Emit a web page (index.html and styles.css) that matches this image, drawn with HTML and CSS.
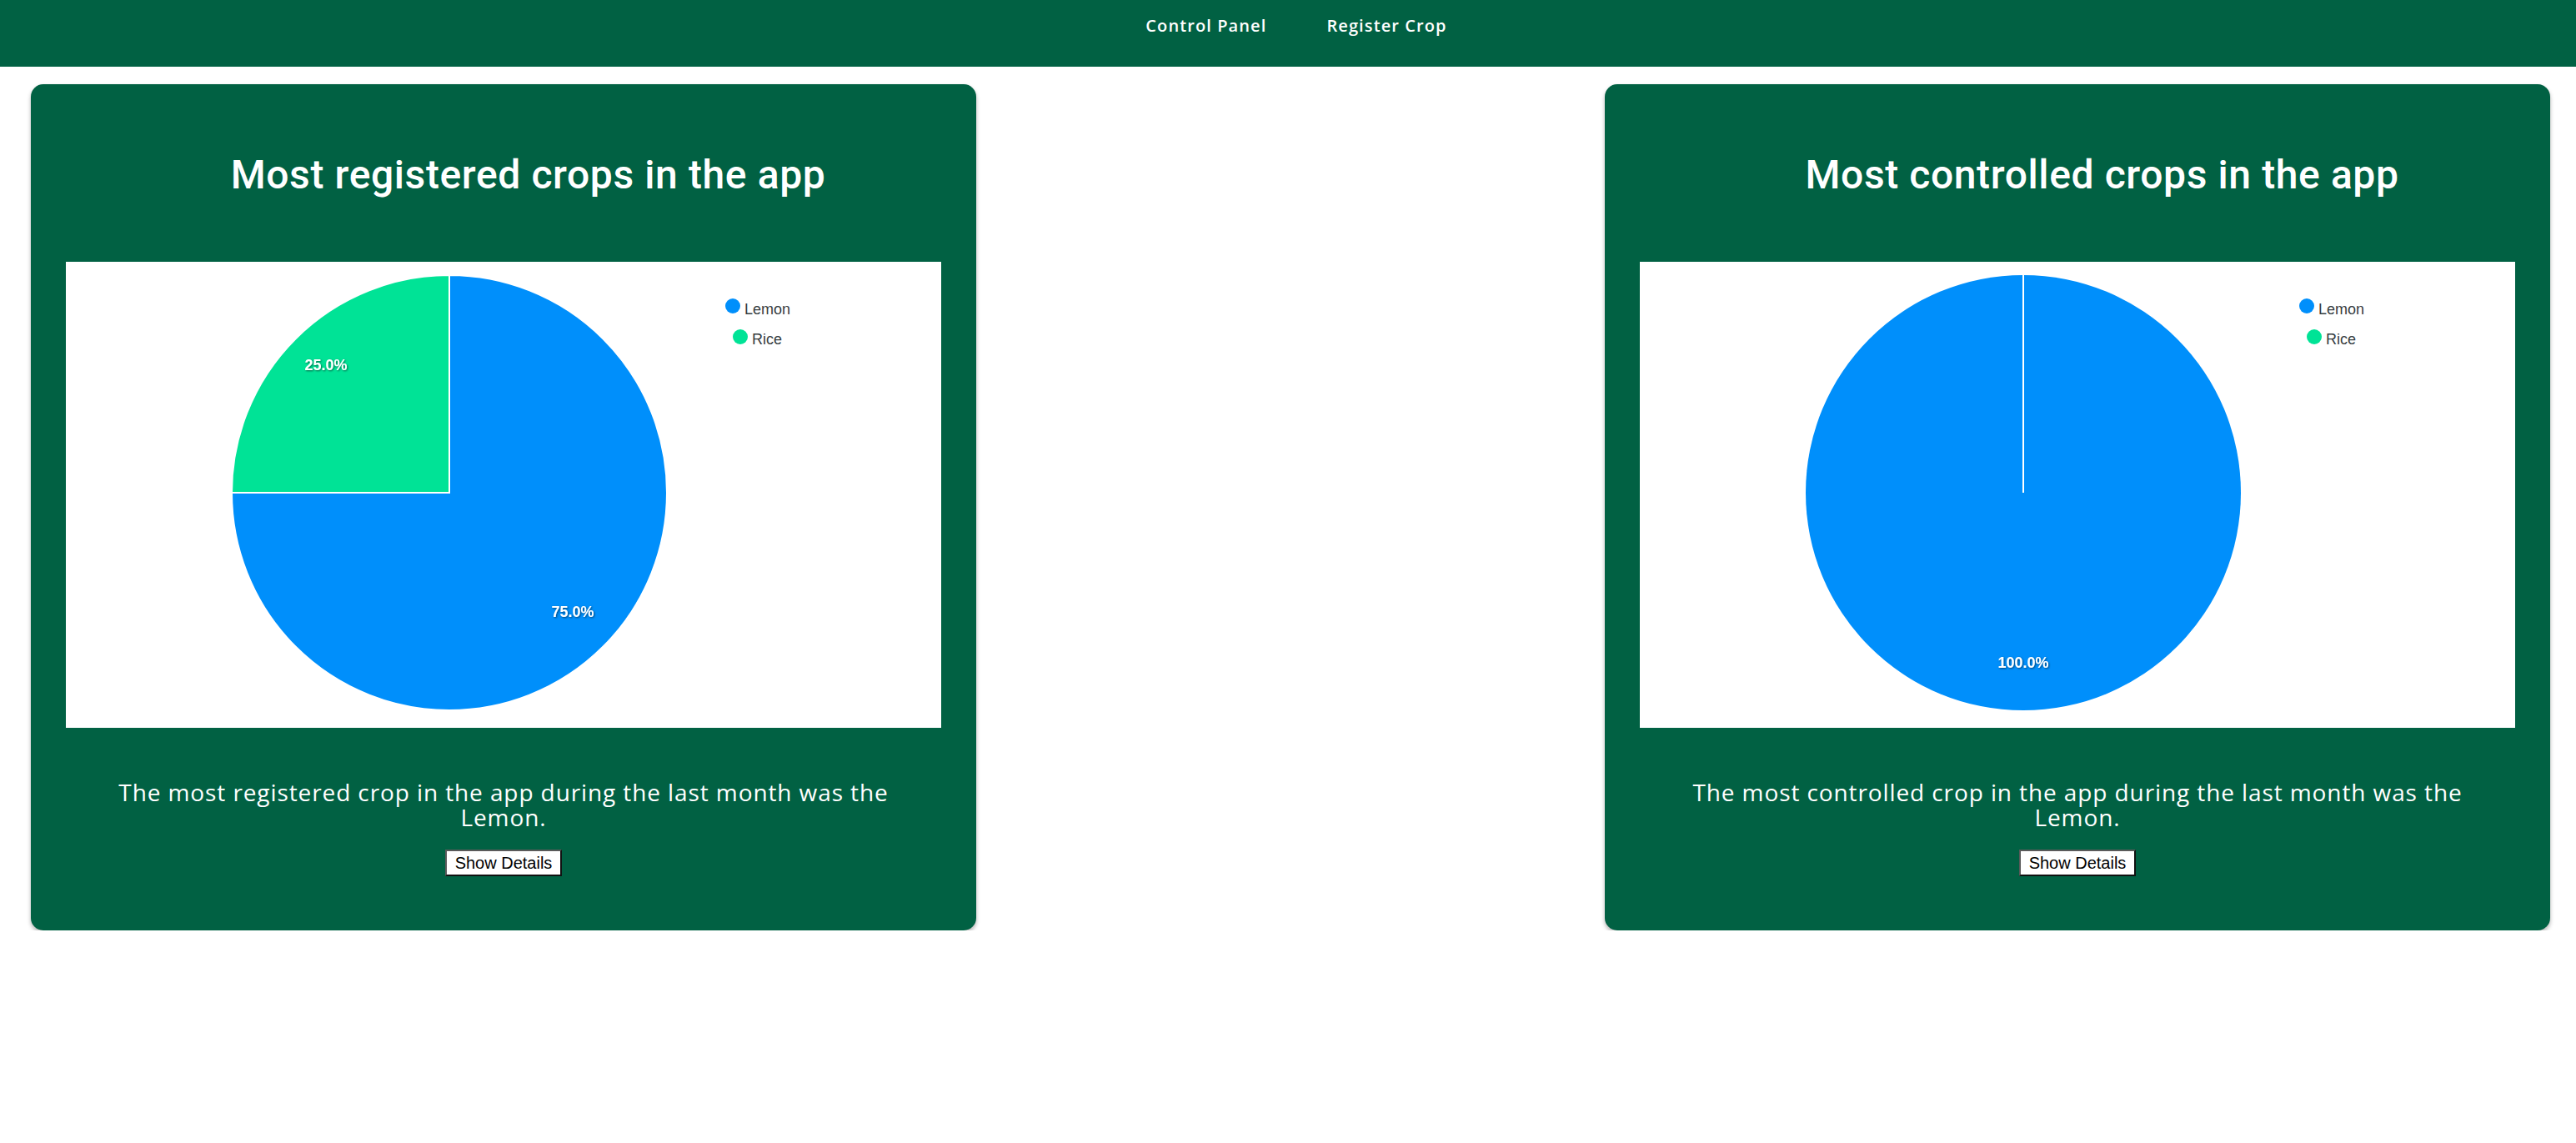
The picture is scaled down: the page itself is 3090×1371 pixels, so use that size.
FILE: index.html
```html
<!DOCTYPE html>
<html lang="en">
<head>
<meta charset="utf-8">
<title>Crops Dashboard</title>
<link rel="stylesheet" href="styles.css">
</head>
<body>
<header class="topbar">
  <nav class="nav">
    <a class="nav-link" href="#">Control Panel</a>
    <a class="nav-link" href="#">Register Crop</a>
  </nav>
</header>
<main class="dashboard">
  <section class="card">
    <h1 class="card-title">Most registered crops in the app</h1>
    <div class="chart">
      <svg class="chart-svg" width="1050" height="559" viewBox="0 0 1050 559">
        <defs>
          <filter id="ds1" x="-20%" y="-40%" width="140%" height="180%">
            <feDropShadow dx="1" dy="1" stdDeviation="1" flood-color="#000" flood-opacity="0.55"/>
          </filter>
        </defs>
        <path d="M460,277 L460,16 A261,261 0 1,1 199,277 Z" fill="#008ffb" stroke="#fff" stroke-width="2"/>
        <path d="M460,277 L199,277 A261,261 0 0,1 460,16 Z" fill="#00e396" stroke="#fff" stroke-width="2"/>
        <text class="pie-label" x="608" y="426" text-anchor="middle" filter="url(#ds1)">75.0%</text>
        <text class="pie-label" x="312" y="130" text-anchor="middle" filter="url(#ds1)">25.0%</text>
        <circle cx="800" cy="53" r="9" fill="#008ffb"/>
        <text class="legend-text" x="814" y="63">Lemon</text>
        <circle cx="809" cy="90" r="9" fill="#00e396"/>
        <text class="legend-text" x="823" y="99">Rice</text>
      </svg>
    </div>
    <p class="card-text">The most registered crop in the app during the last month was the Lemon.</p>
    <button class="details-btn" type="button">Show Details</button>
  </section>
  <section class="card">
    <h1 class="card-title">Most controlled crops in the app</h1>
    <div class="chart">
      <svg class="chart-svg" width="1050" height="559" viewBox="0 0 1050 559">
        <defs>
          <filter id="ds2" x="-20%" y="-40%" width="140%" height="180%">
            <feDropShadow dx="1" dy="1" stdDeviation="1" flood-color="#000" flood-opacity="0.55"/>
          </filter>
        </defs>
        <circle cx="460" cy="277" r="261" fill="#008ffb"/>
        <line x1="460" y1="16" x2="460" y2="277" stroke="#fff" stroke-width="2"/>
        <text class="pie-label" x="460" y="487" text-anchor="middle" filter="url(#ds2)">100.0%</text>
        <circle cx="800" cy="53" r="9" fill="#008ffb"/>
        <text class="legend-text" x="814" y="63">Lemon</text>
        <circle cx="809" cy="90" r="9" fill="#00e396"/>
        <text class="legend-text" x="823" y="99">Rice</text>
      </svg>
    </div>
    <p class="card-text">The most controlled crop in the app during the last month was the Lemon.</p>
    <button class="details-btn" type="button">Show Details</button>
  </section>
</main>
</body>
</html>
```
FILE: styles.css
```css
* {
  box-sizing: border-box;
}

body {
  margin: 0;
  background: #ffffff;
  font-family: "Open Sans", "Liberation Sans", sans-serif;
}

.topbar {
  height: 80px;
  background: #016143;
}

.nav {
  display: flex;
  justify-content: center;
  gap: 72px;
  padding: 17px 0 0 20px;
}

.nav-link {
  color: #ffffff;
  text-decoration: none;
  font-family: "Open Sans", sans-serif;
  font-weight: 600;
  font-size: 20px;
  line-height: 28px;
  letter-spacing: 1.1px;
}

.dashboard {
  display: flex;
  justify-content: space-between;
  align-items: flex-start;
  padding: 21px 31px 0 37px;
}

.card {
  width: 1134px;
  display: flex;
  flex-direction: column;
  align-items: center;
  padding: 0 42px 65px;
  background: #016143;
  border-radius: 15px;
  box-shadow: 0 3px 5px rgba(0, 0, 0, 0.3);
}

.card-title {
  align-self: stretch;
  margin: 0;
  padding: 85px 0 0 59px;
  font-family: Roboto, "Liberation Sans", sans-serif;
  font-weight: 500;
  font-size: 48px;
  line-height: 48px;
  letter-spacing: 0.6px;
  color: #ffffff;
  text-align: center;
}

.chart {
  width: 1050px;
  height: 559px;
  margin-top: 80px;
  background: #ffffff;
}

.chart-svg {
  display: block;
}

.pie-label {
  font-family: "Liberation Sans", Arial, sans-serif;
  font-weight: 700;
  font-size: 18px;
  fill: #ffffff;
}

.legend-text {
  font-family: "Liberation Sans", Arial, sans-serif;
  font-size: 18px;
  fill: #373d3f;
}

.card-text {
  width: 980px;
  margin: 62px 0 0;
  font-family: "Open Sans", sans-serif;
  font-weight: 500;
  font-size: 28px;
  line-height: 30px;
  letter-spacing: 0.9px;
  color: #ffffff;
  text-align: center;
}

.details-btn {
  margin-top: 24px;
  padding: 2px 10px;
  font-family: "Liberation Sans", Arial, sans-serif;
  font-size: 20px;
  line-height: 24px;
  color: #000000;
  background: #ffffff;
  border-width: 2px;
  border-style: solid;
  border-color: #5a5a5a #111111 #111111 #5a5a5a;
  border-radius: 0;
}
```
